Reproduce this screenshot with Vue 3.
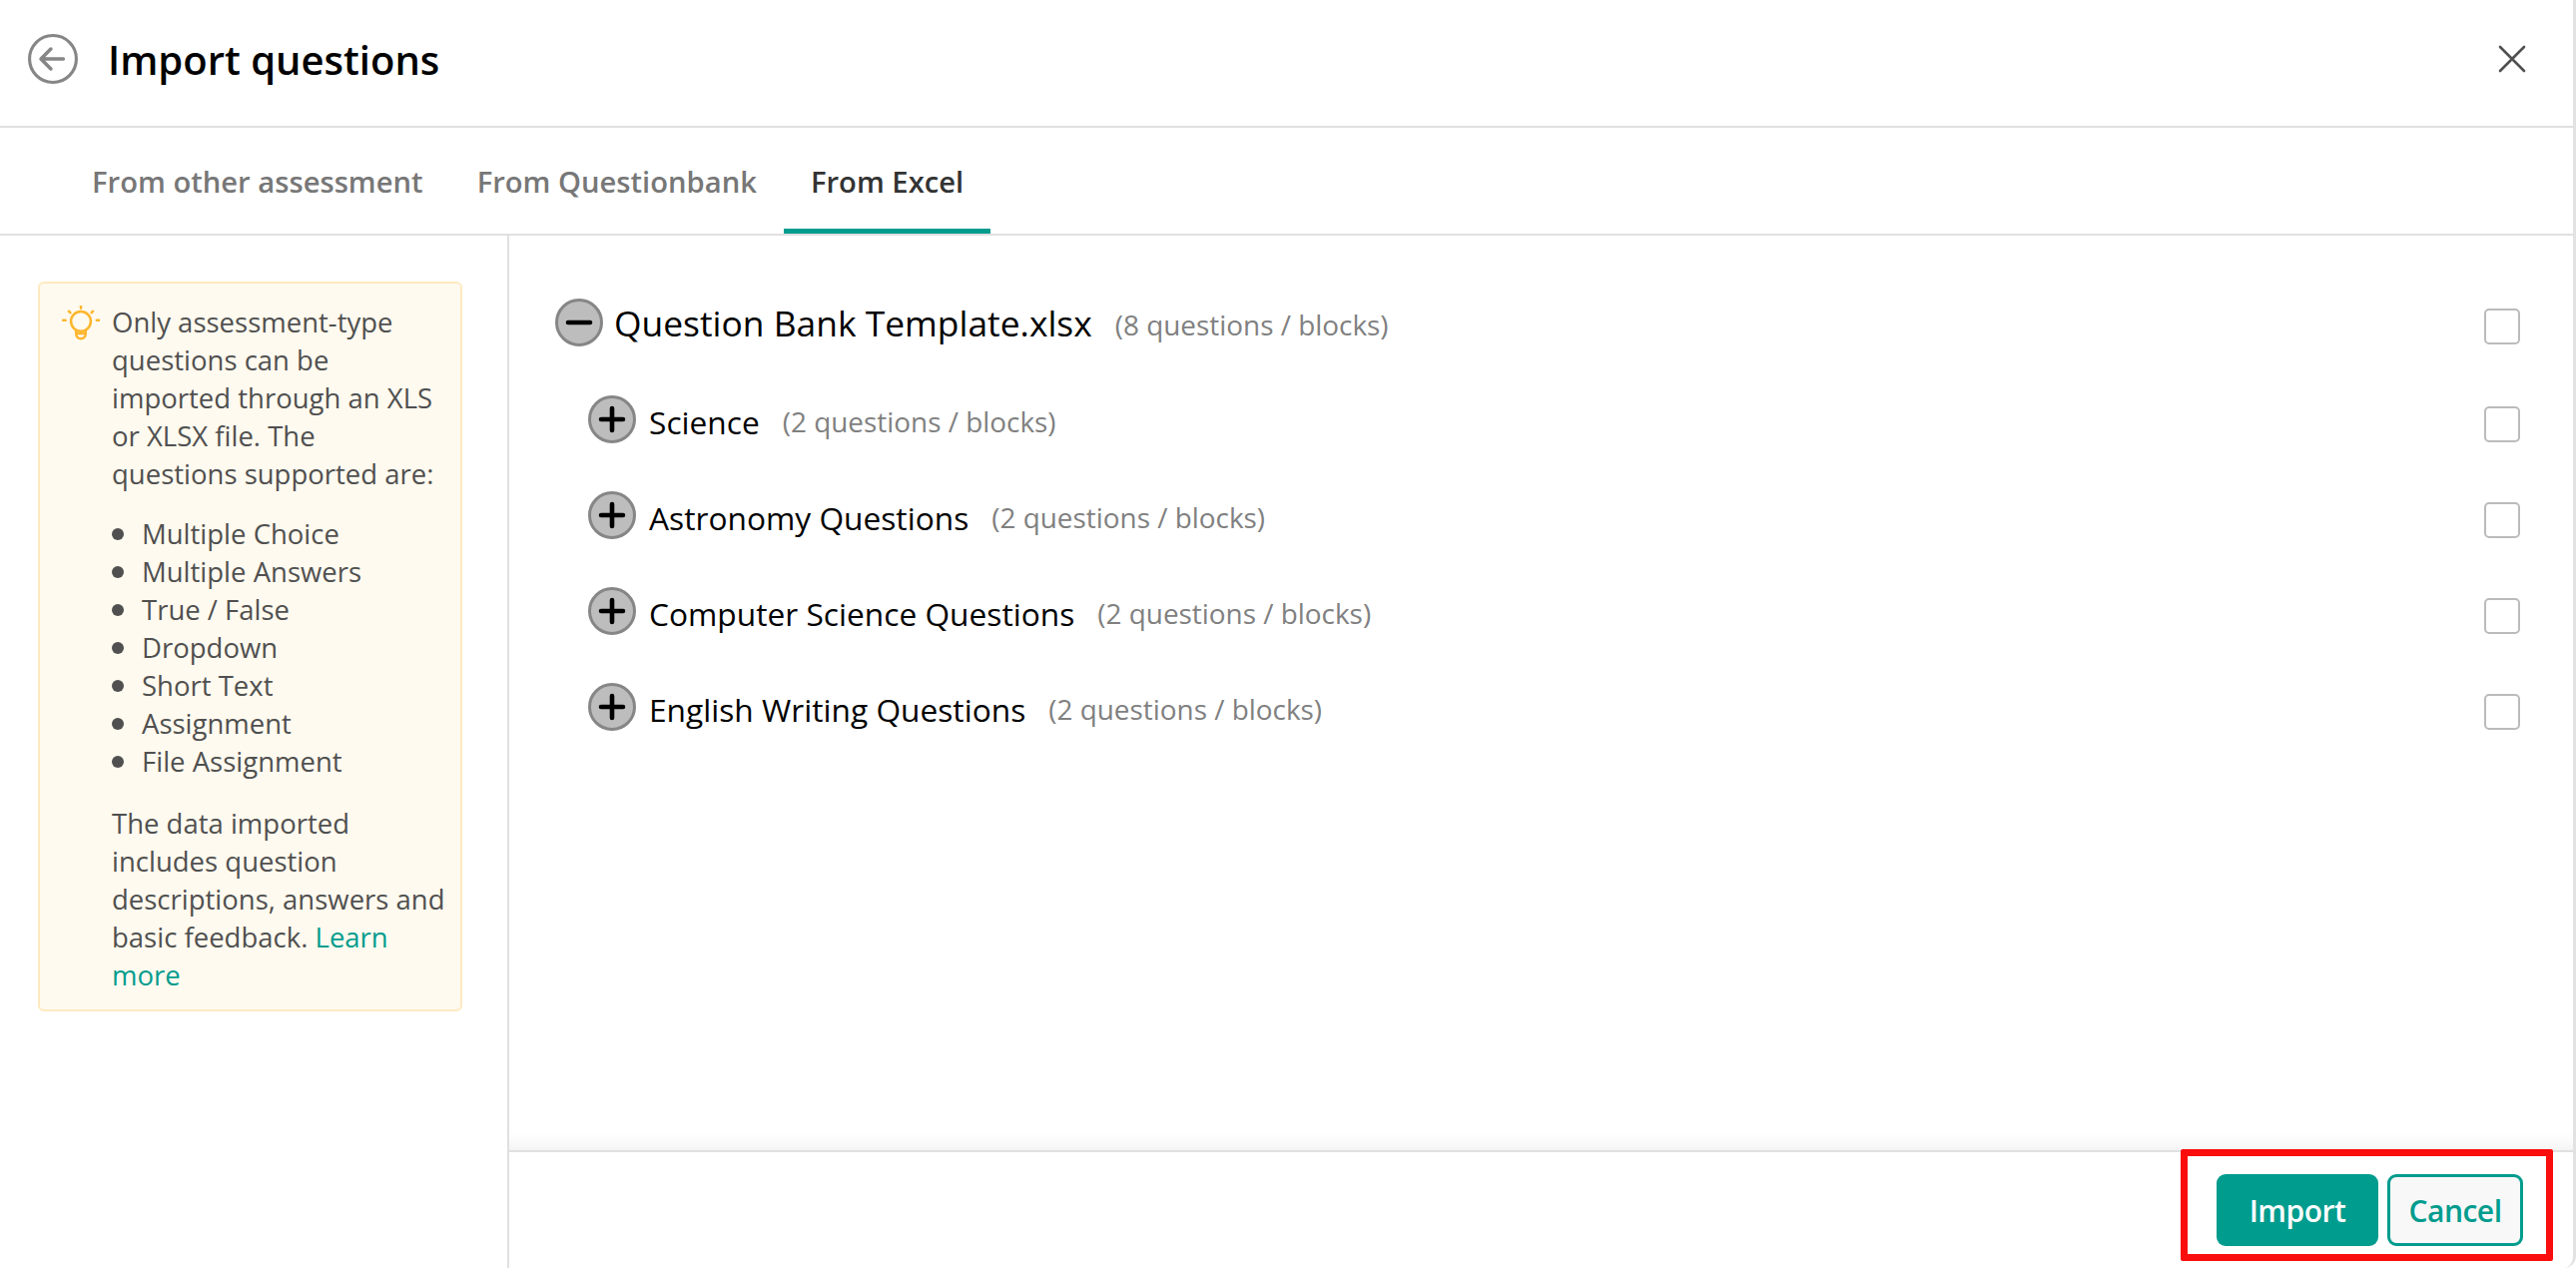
<script setup>
const groups = [
  { name: 'Science' },
  { name: 'Astronomy Questions' },
  { name: 'Computer Science Questions' },
  { name: 'English Writing Questions' }
]
const types = ['Multiple Choice', 'Multiple Answers', 'True / False', 'Dropdown', 'Short Text', 'Assignment', 'File Assignment']
</script>

<template>
  <div class="page">
    <header class="head">
      <svg class="back" viewBox="0 0 48 48" fill="none" stroke="#868686" stroke-linecap="round" stroke-linejoin="round">
        <circle cx="24" cy="24" r="22.5" stroke-width="3" />
        <path d="M34 24H13M22 14.5 12.5 24l9.5 9.5" stroke-width="3.4" />
      </svg>
      <h1 class="title">Import questions</h1>
      <svg class="close" viewBox="0 0 28 28" fill="none" stroke="#505050" stroke-width="2.6" stroke-linecap="round">
        <path d="M2 2l24 24M26 2 2 26" />
      </svg>
    </header>

    <nav class="tabs">
      <a class="tab">From other assessment</a>
      <a class="tab">From Questionbank</a>
      <a class="tab active">From Excel</a>
    </nav>

    <div class="body">
      <aside class="side">
        <div class="note">
          <svg class="bulb" viewBox="0 0 36 36" fill="none" stroke="#fcb62e" stroke-linecap="round" stroke-linejoin="round" stroke-width="2.4">
            <path d="M18 .5v2.2M6.5 5.5l1.4 1.2M29.5 5.5l-1.4 1.2M1 14h2.4M33 14h2.400" />
            <circle cx="18" cy="15" r="9.400" />
            <path d="M13.500 23.500v3.500a4.500 4.500 0 0 0 9 0v-3.500M13.800 26.500h8.400" />
          </svg>
          <div class="note-text">
            <p>Only assessment-type questions can be imported through an XLS or XLSX file. The questions supported are:</p>
            <ul>
              <li v-for="t in types" :key="t">{{ t }}</li>
            </ul>
            <p>The data imported includes question descriptions, answers and basic feedback. <a class="link">Learn more</a></p>
          </div>
        </div>
      </aside>

      <main class="main">
        <div class="tree">
          <div class="row root">
            <span class="toggle">
              <svg viewBox="0 0 48 48" fill="none" stroke="#000" stroke-width="4.600" stroke-linecap="round">
                <path d="M13 24h22" />
              </svg>
            </span>
            <span class="name">Question Bank Template.xlsx</span>
            <span class="meta">(8 questions / blocks)</span>
            <span class="check"></span>
          </div>
          <div v-for="g in groups" :key="g.name" class="row child">
            <span class="toggle">
              <svg viewBox="0 0 48 48" fill="none" stroke="#000" stroke-width="4.600" stroke-linecap="round">
                <path d="M13 24h22M24 13v22" />
              </svg>
            </span>
            <span class="name">{{ g.name }}</span>
            <span class="meta">(2 questions / blocks)</span>
            <span class="check"></span>
          </div>
        </div>
        <footer class="foot">
          <button class="btn primary">Import</button>
          <button class="btn ghost">Cancel</button>
        </footer>
      </main>
    </div>
    <div class="mark"></div>
  </div>
</template>

<style scoped>
.page {
  position: relative;
  box-sizing: border-box;
  width: 2580px;
  height: 1270px;
  display: flex;
  flex-direction: column;
  background: #fff;
  border-right: 3px solid #e2e2e2;
  border-bottom-right-radius: 12px;
  font-family: "Open Sans", "Noto Sans", sans-serif;
  overflow: hidden;
}
.head {
  box-sizing: border-box;
  height: 128px;
  flex: none;
  display: flex;
  align-items: center;
  padding: 0 47px 8px 28px;
  border-bottom: 2px solid #e0e0e0;
}
.back { width: 50px; height: 50px; flex: none; }
.title {
  margin: 0 0 0 30px;
  font-size: 40px;
  font-weight: 600;
  color: #000;
  flex: 1;
}
.close { width: 28px; height: 28px; flex: none; }
.tabs {
  box-sizing: border-box;
  height: 108px;
  flex: none;
  display: flex;
  align-items: stretch;
  padding-left: 65px;
  border-bottom: 2px solid #e0e0e0;
}
.tab {
  box-sizing: border-box;
  display: flex;
  align-items: center;
  padding: 7px 27px 0;
  font-size: 29.2px;
  font-weight: 600;
  color: #777;
  border-bottom: 5px solid transparent;
}
.tab.active {
  color: #333;
  border-bottom-color: #009c8e;
}
.body { flex: 1; display: flex; min-height: 0; }
.side {
  box-sizing: border-box;
  width: 510px;
  flex: none;
  border-right: 2px solid #e0e0e0;
  padding: 46px 0 0 38px;
}
.note {
  box-sizing: border-box;
  width: 425px;
  height: 731px;
  display: flex;
  align-items: flex-start;
  background: #fffaef;
  border: 2px solid #ffe9c0;
  border-radius: 6px;
  padding: 20px 0 0 22px;
}
.bulb { width: 38px; height: 38px; flex: none; margin: 2px 12px 0 0; }
.note-text {
  width: 334px;
  flex: none;
  font-size: 27.5px;
  line-height: 38px;
  color: #505050;
}
.note-text p { margin: 0; }
.note-text ul { margin: 22px 0 24px; padding: 0; list-style: none; }
.note-text li { display: flex; align-items: center; height: 38px; }
.note-text li::before {
  content: "";
  width: 12px;
  height: 12px;
  flex: none;
  margin-right: 18px;
  border-radius: 50%;
  background: #505050;
}
.link { color: #009c8e; }
.main { flex: 1; display: flex; flex-direction: column; min-width: 0; }
.tree { flex: 1; padding: 51px 53px 0 46px; box-shadow: inset 0 -22px 22px -22px rgba(0,0,0,.09); }
.row { display: flex; align-items: center; height: 96px; }
.row.root { height: 72px; margin-bottom: 15px; }
.row.child { padding-left: 33px; }
.toggle {
  box-sizing: border-box;
  width: 48px;
  height: 48px;
  flex: none;
  border-radius: 50%;
  background: #bdbdbd;
  border: 3px solid #868686;
  display: flex;
  align-items: center;
  justify-content: center;
}
.child .toggle { margin-bottom: 4px; }
.toggle svg { width: 48px; height: 48px; flex: none; }
.name {
  margin-left: 11px;
  font-size: 35.4px;
  color: #000;
}
.child .name { font-size: 31.7px; margin-left: 13px; }
.meta {
  margin-left: 23px;
  font-size: 27.9px;
  color: #808080;
}
.root .meta { margin-top: 4px; }
.check {
  box-sizing: border-box;
  margin-left: auto;
  margin-top: 6px;
  width: 36px;
  height: 36px;
  flex: none;
  border: 2px solid #bbb;
  border-radius: 5px;
}
.root .check { margin-top: 8px; }
.foot {
  box-sizing: border-box;
  height: 118px;
  flex: none;
  display: flex;
  justify-content: flex-end;
  gap: 9px;
  padding: 22px 50px 0 0;
  border-top: 2px solid #e0e0e0;
}
.btn {
  box-sizing: border-box;
  height: 72px;
  border-radius: 9px;
  font-family: inherit;
  font-size: 30px;
  font-weight: 600;
  letter-spacing: -.5px;
}
.primary { width: 162px; background: #009c8e; border: 0; color: #fff; }
.ghost { width: 136px; background: #f8f8f8; border: 3px solid #009c8e; color: #009c8e; }
.mark {
  position: absolute;
  left: 2184px;
  top: 1151px;
  width: 373px;
  height: 112px;
  box-sizing: border-box;
  border: 7px solid #f90d0d;
  border-radius: 2px;
}
</style>
